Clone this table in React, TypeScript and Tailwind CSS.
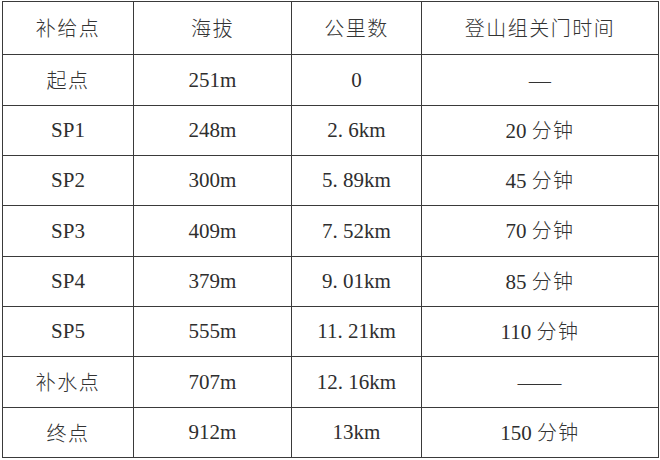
import React from 'react';

const rows: string[][] = [
  ['补给点', '海拔', '公里数', '登山组关门时间'],
  ['起点', '251m', '0', '—'],
  ['SP1', '248m', '2.6km', '20 分钟'],
  ['SP2', '300m', '5.89km', '45 分钟'],
  ['SP3', '409m', '7.52km', '70 分钟'],
  ['SP4', '379m', '9.01km', '85 分钟'],
  ['SP5', '555m', '11.21km', '110 分钟'],
  ['补水点', '707m', '12.16km', '——'],
  ['终点', '912m', '13km', '150 分钟'],
];

// split latin runs from CJK so numbers get the serif face and CJK the sans
const Cell: React.FC<{ text: string }> = ({ text }) => {
  if (/^—+$/.test(text)) {
    return (
      <span className="inline-block scale-x-[1.4] font-['Noto_Sans_CJK_SC',sans-serif] font-light text-[20px] text-[#333]">
        {text}
      </span>
    );
  }
  const parts = text.split(/([\u4e00-\u9fff]+)/).filter(Boolean);
  return (
    <span className="whitespace-pre">
      {parts.map((p, i) =>
        /[\u4e00-\u9fff]/.test(p) ? (
          <span
            key={i}
            className="font-['Noto_Sans_CJK_SC',sans-serif] font-light text-[20px] tracking-[1.5px] text-[#333]"
          >
            {p}
          </span>
        ) : (
          <span key={i} className="font-['Liberation_Serif',serif] text-[21px] text-[#2e2e2e]">
            {p.split('.').map((seg, j, arr) => (
              <React.Fragment key={j}>
                {seg}
                {j < arr.length - 1 && <span className="inline-block w-[10.5px]">.</span>}
              </React.Fragment>
            ))}
          </span>
        )
      )}
    </span>
  );
};

export default function App() {
  return (
    <div className="w-[660px] h-[460px] bg-white pt-[1px] pl-[2px]">
      <div className="inline-grid grid-cols-[130px_157px_129px_236px] grid-rows-[52px_50px_49px_49px_50px_49px_49px_50px_49px] gap-px p-px bg-[#3a3a3a]">
        {rows.flat().map((t, i) => (
          <div key={i} className="bg-white flex items-center justify-center leading-none">
            <Cell text={t} />
          </div>
        ))}
      </div>
    </div>
  );
}
